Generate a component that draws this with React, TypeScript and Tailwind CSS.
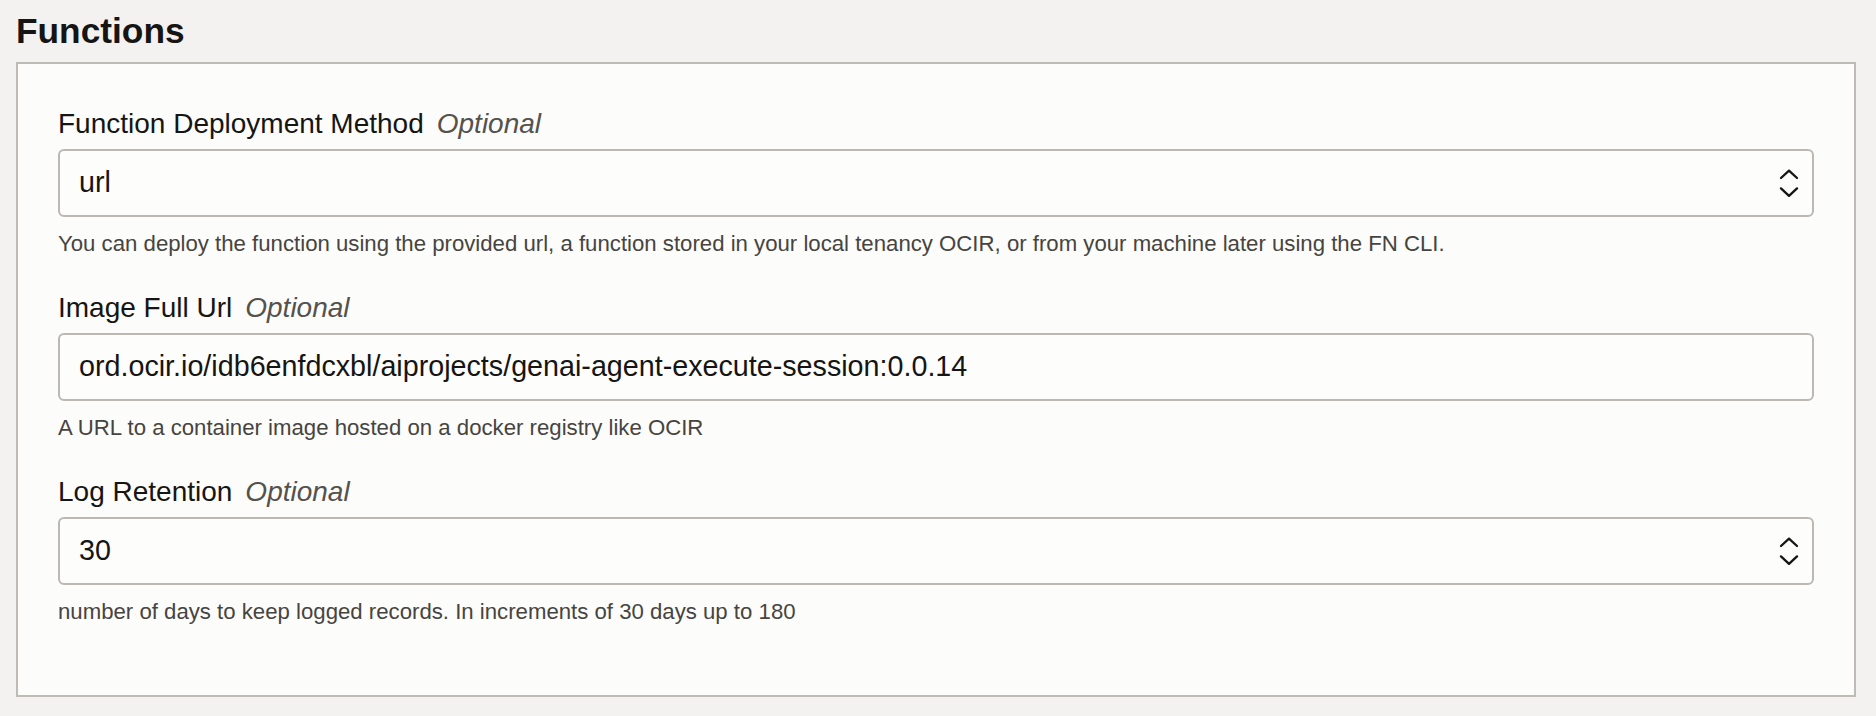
import type { ReactNode } from 'react'

const font = { fontFamily: '"Liberation Sans", Arial, sans-serif' }

function Chevrons() {
  return (
    <svg width="20" height="28" viewBox="0 0 20 28" fill="none" className="shrink-0">
      <polyline points="2,9 10,1.6 18,9" stroke="#161513" strokeWidth="2.3" strokeLinecap="round" strokeLinejoin="round" />
      <polyline points="2,19.4 10,26.8 18,19.4" stroke="#161513" strokeWidth="2.3" strokeLinecap="round" strokeLinejoin="round" />
    </svg>
  )
}

interface FieldProps {
  label: string
  value: string
  help: string
  select?: boolean
}

function Field({ label, value, help, select }: FieldProps) {
  return (
    <div className="flex flex-col">
      <div className="flex items-baseline text-[28px] leading-[34px] text-[#161513]">
        <span>{label}</span>
        <span className="ml-[13px] italic text-[#55524e]">Optional</span>
      </div>
      <div className="mt-2 flex h-[68px] items-center rounded-[6px] border-2 border-[#bcb8b3] bg-[#fdfdfc] pl-[19px] pr-[13px]">
        <span className="flex-1 text-[28.7px] text-[#161513]">{value}</span>
        {select && <Chevrons />}
      </div>
      <p className="mt-[13px] text-[22.2px] leading-[28px] text-[#47443f]">{help}</p>
    </div>
  )
}

function Panel({ children }: { children: ReactNode }) {
  return (
    <div className="flex flex-col gap-[33px] border-2 border-[#bebab5] bg-[#fcfcfb] px-10 pb-[69px] pt-[43px]">
      {children}
    </div>
  )
}

export default function App() {
  return (
    <div className="h-[716px] w-full overflow-hidden bg-[#f3f2f1] pl-4 pr-5" style={font}>
      <h2 className="pt-[11px] pb-[11px] text-[35.3px] font-bold leading-[40px] text-[#161513]">
        Functions
      </h2>
      <Panel>
        <Field
          label="Function Deployment Method"
          value="url"
          select
          help="You can deploy the function using the provided url, a function stored in your local tenancy OCIR, or from your machine later using the FN CLI."
        />
        <Field
          label="Image Full Url"
          value="ord.ocir.io/idb6enfdcxbl/aiprojects/genai-agent-execute-session:0.0.14"
          help="A URL to a container image hosted on a docker registry like OCIR"
        />
        <Field
          label="Log Retention"
          value="30"
          select
          help="number of days to keep logged records. In increments of 30 days up to 180"
        />
      </Panel>
    </div>
  )
}
